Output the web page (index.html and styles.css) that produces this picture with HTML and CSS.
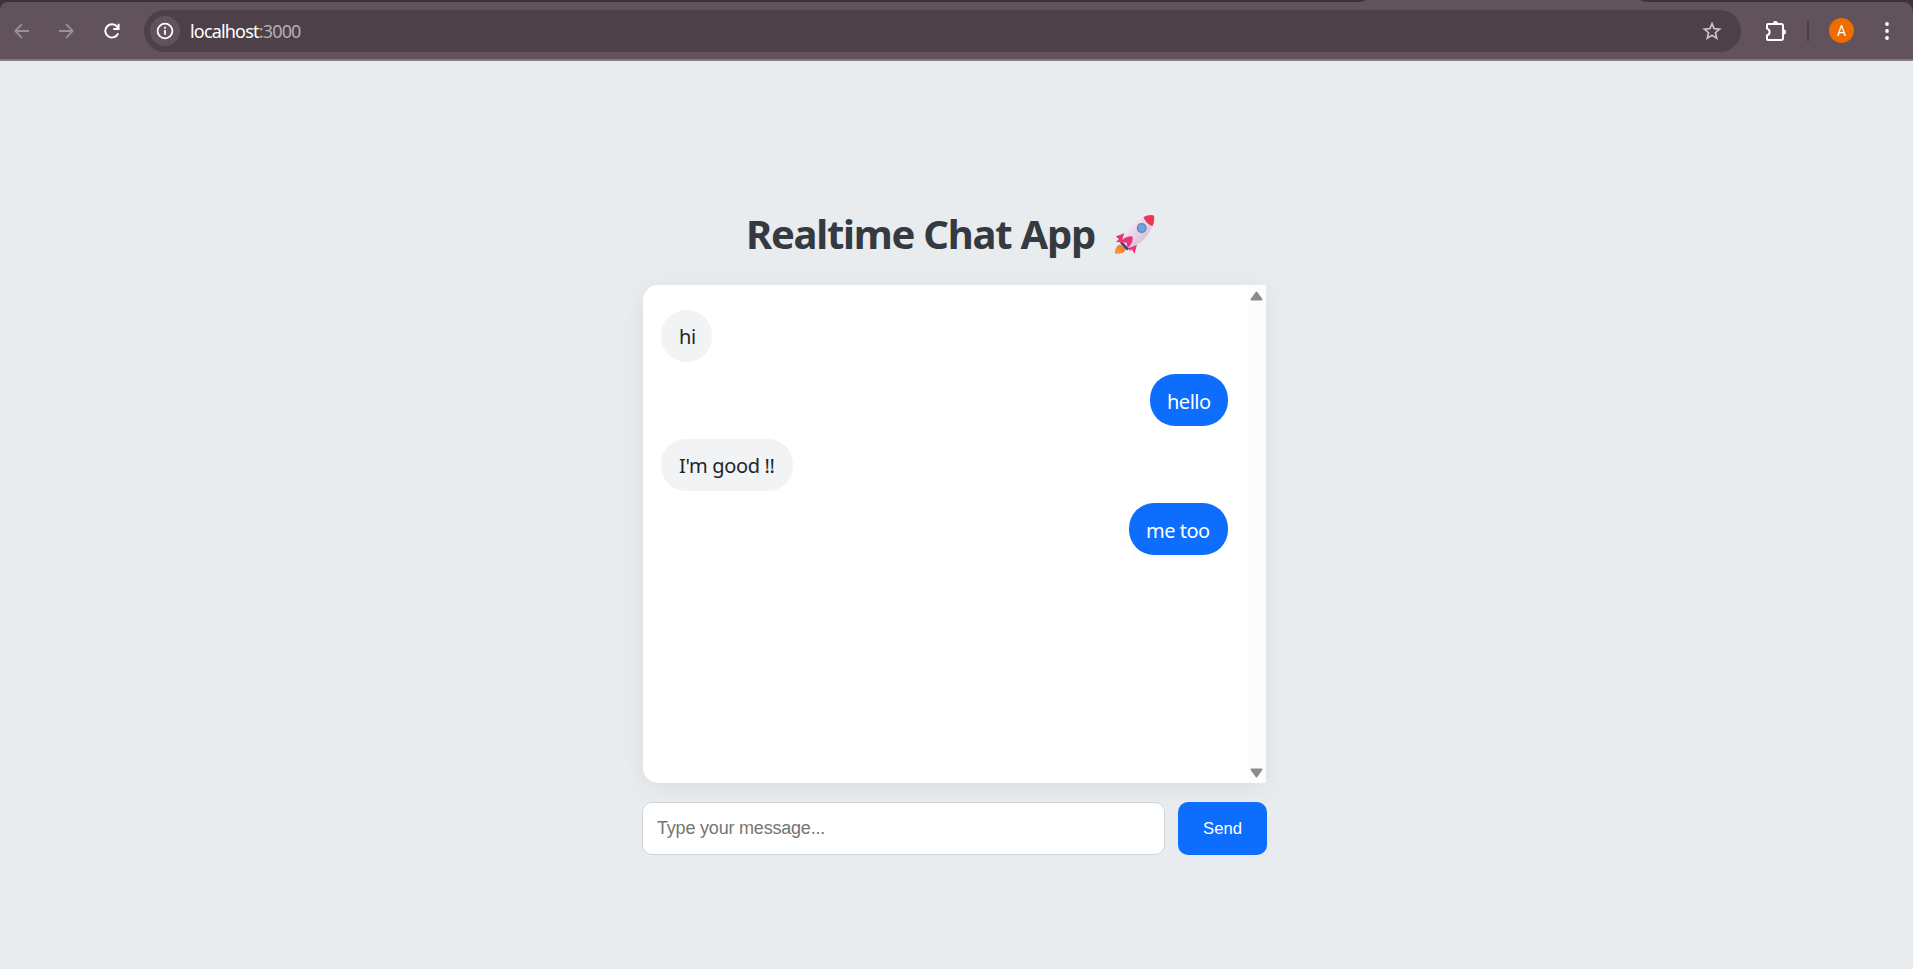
FILE: index.html
```html
<!DOCTYPE html>
<html lang="en">
<head>
<meta charset="utf-8">
<title>Realtime Chat App</title>
<link rel="stylesheet" href="styles.css">
</head>
<body>
<header class="browser">
  <div class="tab-edge"><span class="tab"></span></div>
  <div class="toolbar">
    <svg class="nav back" viewBox="0 0 16 16"><path d="M15 8H1.5M8 1.2 1.2 8 8 14.8"/></svg>
    <svg class="nav forward" viewBox="0 0 16 16"><path d="M1 8h13.5M8 1.2 14.8 8 8 14.8"/></svg>
    <svg class="nav reload" viewBox="0 0 16 16"><path d="M14.1 10.3A6.6 6.6 0 1 1 13.2 3.9L14.6 5.4M14.6.7v5.4H9.2"/></svg>
    <div class="address">
      <span class="info"><svg viewBox="0 0 18 18"><circle cx="9" cy="9" r="7.4"/><path d="M9 8v4.8M9 4.8v1.9"/></svg></span>
      <span class="url">localhost<span class="port">:3000</span></span>
      <svg class="star" viewBox="0 0 20 20"><path d="M10 2.6 12.1 7.6 17.6 8.1 13.4 11.7 14.7 17.1 10 14.2 5.3 17.1 6.6 11.7 2.4 8.1 7.9 7.6Z"/></svg>
    </div>
    <svg class="puzzle" viewBox="0 0 22 22"><path class="outline" d="M2.9 4H16.3Q18 4 18 5.7V18.3Q18 20 16.3 20H2.9Q2 20 2 19V15.4Q4.6 14.8 4.6 12T2 8.6V5Q2 4 2.9 4Z"/><path class="knob" d="M7.8 4a2.6 3 0 0 1 5.2 0ZM18 9.2a3 2.8 0 0 1 0 5.6Z"/></svg>
    <span class="divider"></span>
    <span class="avatar">A</span>
    <svg class="menu" viewBox="0 0 6 18"><circle cx="3" cy="2" r="1.9"/><circle cx="3" cy="9" r="1.9"/><circle cx="3" cy="16" r="1.9"/></svg>
  </div>
</header>
<main class="chat">
  <h1 class="title"><span class="title-text">Realtime Chat App</span>
    <svg class="rocket" viewBox="0 0 40 40">
      <defs>
        <linearGradient id="hull" x1="0" y1="0" x2="1" y2="1"><stop offset="0.2" stop-color="#f3eaf4"/><stop offset="0.8" stop-color="#d5bfd8"/></linearGradient>
        <linearGradient id="fin" x1="0" y1="0" x2="1" y2="1"><stop offset="0" stop-color="#d93b69"/><stop offset="1" stop-color="#ff2b80"/></linearGradient>
        <linearGradient id="flame" x1="1" y1="0" x2="0" y2="1"><stop offset="0" stop-color="#e57235"/><stop offset="1" stop-color="#ffa03c"/></linearGradient>
      </defs>
      <path fill="url(#flame)" d="M5.5 29.5Q0 31.5 .3 38.6q1.6.8 2.4-.4 1.8 1.5 3.5 0 4 .2 5.3-4.7Z"/>
      <path fill="#3c3c7c" d="M5.5 28 12.5 35.5 15 33 8 26Z"/>
      <path fill="url(#fin)" d="M9.5 18.3 1.3 21.6 4.5 24 1.5 27 9 27.5ZM14 31 14.8 35.8 17.5 34.5 20 39 22.3 30Z"/>
      <path fill="url(#hull)" d="M7.5 26.5Q10 9 29.5 2L38 10.5Q31 29 13.8 33Z"/>
      <path fill="#ef3655" d="M29 2.1Q34-.7 39.3.4 40.6 6 38 11.2 31.5 9 29 2.1Z"/>
      <path fill="url(#fin)" d="M5.7 27.5Q10.5 20.5 17.8 21.2 19.8 27 13.2 33L12 27.5Z"/>
      <circle cx="27.2" cy="13.1" r="5" fill="#8d7b91"/><circle cx="27.2" cy="13.1" r="3.5" fill="#5caaf5"/>
    </svg>
  </h1>
  <section class="messages">
    <div class="list">
      <div class="bubble theirs hi"><span>hi</span></div>
      <div class="bubble mine hello"><span>hello</span></div>
      <div class="bubble theirs good"><span>I'm good !!</span></div>
      <div class="bubble mine too"><span>me too</span></div>
    </div>
    <div class="scrollbar">
      <svg viewBox="0 0 13 10"><path d="M6.5 1.5 11.5 8.5H1.5Z"/></svg>
      <svg viewBox="0 0 13 10"><path d="M6.5 8.5 11.5 1.5H1.5Z"/></svg>
    </div>
  </section>
  <form class="composer">
    <input class="field" type="text" placeholder="Type your message...">
    <button class="send" type="button">Send</button>
  </form>
</main>
</body>
</html>
```

FILE: styles.css
```css
* { box-sizing: border-box; }
body { margin: 0; height: 969px; overflow: hidden; background: #e8ecef; font-family: "Noto Sans", "Open Sans", sans-serif; }
.browser { height: 61px; background: #3f333b; border-bottom: 2px solid #86787f; }
.tab-edge { height: 2px; }
.tab { display: block; width: 284px; height: 2px; margin-left: 1361px; background: #62525c; clip-path: polygon(5px 0, 279px 0, 100% 100%, 0 100%); }
.toolbar { height: 57px; display: flex; align-items: center; background: #62525c; border-radius: 8px 10px 0 0; padding-left: 14px; }
.nav { width: 16px; height: 16px; fill: none; stroke: #9b9097; stroke-width: 1.8; flex: none; }
.forward { margin-left: 28px; }
.reload { margin-left: 30px; stroke: #fff; stroke-width: 2; }
.address { width: 1597px; height: 42px; margin-left: 24px; border-radius: 21px; background: #4d4049; display: flex; align-items: center; padding: 0 19px 0 6px; flex: none; }
.info { width: 30px; height: 30px; border-radius: 50%; background: #62525c; display: flex; align-items: center; justify-content: center; }
.info svg { width: 18px; height: 18px; fill: none; stroke: #fff; stroke-width: 1.8; }
.url { margin-left: 10px; color: #fff; font-size: 18px; letter-spacing: -0.82px; }
.port { color: #b5aeb2; }
.star { width: 20px; height: 20px; margin-left: auto; fill: none; stroke: #c9c3c6; stroke-width: 1.7; overflow: visible; }
.puzzle { width: 22px; height: 22px; margin-left: 24px; }
.outline { fill: none; stroke: #fff; stroke-width: 2; }
.knob { fill: #fff; }
.divider { width: 2px; height: 20px; margin-left: 20px; background: #4a3c45; }
.avatar { width: 25px; height: 25px; margin-left: 20px; border-radius: 50%; background: #ef6c00; color: #fff; font: 14px Roboto, sans-serif; display: flex; align-items: center; justify-content: center; }
.menu { width: 6px; height: 18px; margin-left: 30px; fill: #fff; }
.chat { width: 625px; margin: 0 auto; padding-top: 146px; position: relative; left: -2px; }
.title { height: 54px; margin: 0 0 24px; padding-left: 104px; display: flex; align-items: center; color: #343a40; font-size: 40px; line-height: 54px; white-space: nowrap; }
.title-text { width: 350px; letter-spacing: -1.25px; }
.rocket { width: 41px; height: 40px; margin: 2px 0 0 18px; }
.messages { width: 623px; height: 498px; margin-left: 1px; display: flex; background: #fff; border-radius: 15px 0 0 15px; box-shadow: 0 5px 25px rgba(0, 0, 0, 0.06); }
.list { flex: 1; padding: 25px 19px 0 18px; display: flex; flex-direction: column; gap: 12px; }
.bubble { height: 52px; border-radius: 25px; padding: 1px 0 0 18px; display: flex; align-items: center; font-size: 20px; letter-spacing: -0.35px; white-space: nowrap; }
.theirs { background: #f1f3f5; color: #212529; align-self: flex-start; }
.mine { background: #0d6efd; color: #fff; align-self: flex-end; padding: 3px 0 0 17px; letter-spacing: -0.5px; }
.hi { width: 51px; }
.hello { width: 78px; }
.good { width: 132px; margin-top: 1px; }
.too { width: 99px; }
.scrollbar { width: 19px; padding: 6px 3px 5px; display: flex; flex-direction: column; justify-content: space-between; background: #fcfcfc; }
.scrollbar svg { width: 13px; height: 10px; fill: #8b8b8b; stroke: #8b8b8b; stroke-width: 2; stroke-linejoin: round; }
.composer { display: flex; gap: 13px; margin-top: 19px; }
.field { width: 523px; height: 53px; padding: 0 14px; border: 1px solid #ced4da; border-radius: 10px; font: 18px "Liberation Sans", Arial, sans-serif; letter-spacing: -0.2px; background: #fff; }
.field::placeholder { color: #757575; opacity: 1; }
.send { width: 89px; height: 53px; padding: 0; border: 0; border-radius: 10px; background: #0d6efd; color: #fff; font: 16.6px "Liberation Sans", Arial, sans-serif; }
```
